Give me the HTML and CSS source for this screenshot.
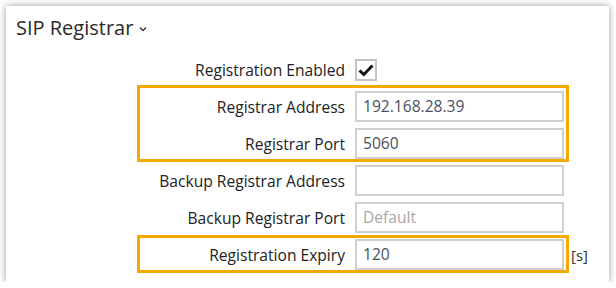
FILE: index.html
```html
<!DOCTYPE html>
<html>
<head>
<meta charset="utf-8">
<link rel="stylesheet" href="styles.css">
</head>
<body>
<div class="card">
  <div class="title">SIP Registrar <svg class="chev" width="8" height="6" viewBox="0 0 8 6"><polyline points="1,1.5 4,4.5 7,1.5" fill="none" stroke="#333" stroke-width="1.3"/></svg></div>
  <div class="form">
    <div class="row">
      <div class="label">Registration Enabled</div>
      <div class="check"><svg width="18" height="18" viewBox="0 0 18 18"><path d="M2.5 9.5 L6.8 13.5 L15.5 4.5" fill="none" stroke="#111" stroke-width="3"/></svg></div>
    </div>
    <div class="group g1">
      <div class="row">
        <div class="label">Registrar Address</div>
        <div class="input">192.168.28.39</div>
      </div>
      <div class="row r2">
        <div class="label">Registrar Port</div>
        <div class="input">5060</div>
      </div>
    </div>
    <div class="row r-ba">
      <div class="label">Backup Registrar Address</div>
      <div class="input"></div>
    </div>
    <div class="row r2">
      <div class="label">Backup Registrar Port</div>
      <div class="input ph">Default</div>
    </div>
    <div class="group g2">
      <div class="row">
        <div class="label">Registration Expiry</div>
        <div class="input">120</div>
        <div class="unit">[s]</div>
      </div>
    </div>
  </div>
</div>
</body>
</html>
```
FILE: styles.css
```css
html, body {
  margin: 0;
  padding: 0;
  background: #fff;
}
body {
  font-family: "Open Sans", "Noto Sans", sans-serif;
  color: #222;
}
.card {
  box-sizing: border-box;
  margin: 6px 0 0 6px;
  width: 603px;
  height: 276px;
  background: #fff;
  box-shadow: 0 0 7px rgba(0, 0, 0, 0.4);
  padding: 3px 0 0 10px;
}
.title {
  font-size: 20px;
  line-height: 26px;
  height: 45px;
  padding-bottom: 7px;
  box-sizing: border-box;
  color: #2a2a2a;
  display: flex;
  align-items: center;
  gap: 6px;
}
.chev {
  margin-top: 2px;
}
.form {
  margin-left: 124px;
  width: 426px;
  display: flex;
  flex-direction: column;
}
.row {
  display: flex;
  align-items: center;
  height: 31px;
}
.label {
  flex-shrink: 0;
  width: 205px;
  text-align: right;
  font-size: 15.6px;
  margin-right: 10px;
  white-space: nowrap;
}
.input {
  flex-shrink: 0;
  box-sizing: border-box;
  width: 209px;
  height: 31px;
  border: 2px solid #cfcfcf;
  padding: 0 6px;
  font-size: 15.6px;
  line-height: 27px;
  color: #4a5160;
}
.input.ph {
  color: #a8a8a8;
}
.check {
  box-sizing: border-box;
  width: 22px;
  height: 22px;
  border: 2px solid #c4c4c4;
  display: flex;
  align-items: center;
  justify-content: center;
}
.unit {
  flex-shrink: 0;
  font-size: 15px;
  margin-left: 7px;
  color: #333;
}
.group {
  border: 3px solid #f5a800;
  margin: 0 -3px;
}
.g1 {
  padding-top: 3px;
}
.g2 {
  margin-top: 2px;
  padding-top: 1px;
}
.r2 {
  margin-top: 6px;
}
.r-ba {
  margin-top: 3px;
}
```
